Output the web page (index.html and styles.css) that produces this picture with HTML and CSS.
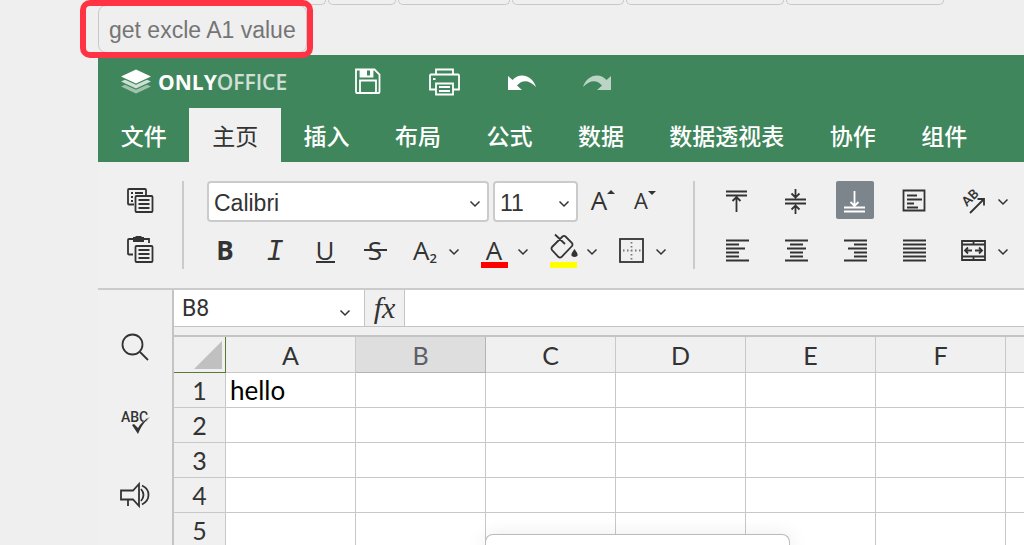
FILE: index.html
```html
<!DOCTYPE html>
<html lang="zh-CN">
<head>
    <meta charset="UTF-8">
    <meta name="viewport" content="width=device-width, initial-scale=1.0">
    <title>ONLYOFFICE</title>
    <link rel="stylesheet" href="styles.css">
</head>
<body>
    <svg class="defs" aria-hidden="true">
        <symbol id="chevron" viewBox="0 0 12 8"><path d="M1.5 1.5L6 6l4.500-4.500"/></symbol>
    </svg>

    <div class="host-buttons">
        <button class="host-button w-first"></button>
        <button class="host-button w-small"></button>
        <button class="host-button w-mid"></button>
        <button class="host-button w-mid"></button>
        <button class="host-button w-large"></button>
        <button class="host-button w-large"></button>
    </div>
    <div class="host-action">
        <button class="value-button">get excle A1 value</button>
        <div class="highlight"></div>
    </div>

    <div class="editor">
        <header class="header">
            <div class="title-bar">
                <svg class="logo-mark" viewBox="0 0 32 26">
                    <path d="M1 17.500l4-1.800 11 5 11-5 4 1.800-15 7z" fill="#fff" opacity=".5"/>
                    <path d="M1 12.500l4-1.800 11 5 11-5 4 1.800-15 7z" fill="#fff" opacity=".75"/>
                    <path d="M16 .5l15 7-15 7-15-7z" fill="#fff"/>
                </svg>
                <div class="logo-text"><b>ONLY</b><span>OFFICE</span></div>
                <div class="quick">
                    <button class="quick-button" aria-label="保存">
                        <svg viewBox="0 0 32 32"><path d="M4 3.500h18.500l5 5V26q0 1-1 1H5q-1 0-1-1z"/><path d="M8.500 4v6.500h12V4M8 26.500v-12h16v12"/><path d="M9 4h6v6H9zM18 4h2v6h-2z" fill="#fff" stroke="none"/></svg>
                    </button>
                    <button class="quick-button" aria-label="打印">
                        <svg viewBox="0 0 32 32"><path d="M8 8.500v-5h17v5M7.500 23.500H2v-14q0-1 1-1h27q1 0 1 1v14h-5.500M8 17.500h17v11H8zM11 21h11M11 25h11"/><path d="M5 12h2.500v2H5z" fill="#fff" stroke="none"/></svg>
                    </button>
                    <button class="quick-button" aria-label="撤销">
                        <svg viewBox="0 0 32 32"><path class="solid" d="M4 10v14h14l-5-4.500c5-6 12-6 19 1.500C28 9 16 6 8.500 14z"/></svg>
                    </button>
                    <button class="quick-button dim" aria-label="重做">
                        <svg viewBox="0 0 32 32"><path class="solid" d="M31 10v14H17l5-4.500c-5-6-12-6-19 1.500C7 9 19 6 26.500 14z"/></svg>
                    </button>
                </div>
            </div>
            <nav class="tabs">
                <button class="tab">文件</button>
                <button class="tab active">主页</button>
                <button class="tab">插入</button>
                <button class="tab">布局</button>
                <button class="tab">公式</button>
                <button class="tab">数据</button>
                <button class="tab">数据透视表</button>
                <button class="tab">协作</button>
                <button class="tab">组件</button>
            </nav>
        </header>

        <div class="toolbar">
            <div class="group clipboard">
                <div class="tool-row">
                    <button class="tool" aria-label="复制">
                        <svg viewBox="0 0 30 30"><path d="M9 19.500H4q-1 0-1-1V5q0-1 1-1h16q1 0 1 1v5"/><path d="M6 8h2M10 8h8M6 12h2M6 16h2"/><rect x="10.500" y="11" width="17" height="16" rx="1"/><path d="M13.500 15h11M13.500 19h11M13.500 23h11"/></svg>
                    </button>
                </div>
                <div class="tool-row">
                    <button class="tool" aria-label="粘贴">
                        <svg viewBox="0 0 30 30"><path d="M8 19.500H4q-1 0-1-1V5q0-1 1-1h20v4"/><path d="M8 2h2l1-1h5l1 1h2v5H8z" fill="#333" stroke="none"/><rect x="10.500" y="11" width="17" height="16" rx="1"/><path d="M13.500 15h11M13.500 19h11M13.500 23h11"/></svg>
                    </button>
                </div>
            </div>
            <div class="group font">
                <div class="tool-row combos">
                    <label class="combo font-name">
                        <select aria-label="字体"><option>Calibri</option></select>
                        <svg class="chevron"><use href="#chevron"/></svg>
                    </label>
                    <label class="combo font-size">
                        <select aria-label="字号"><option>11</option></select>
                        <svg class="chevron"><use href="#chevron"/></svg>
                    </label>
                    <button class="tool resize grow">A<svg class="mark" viewBox="0 0 8 5"><path d="M0 5l4-4 4 4z"/></svg></button>
                    <button class="tool resize shrink">A<svg class="mark" viewBox="0 0 8 5"><path d="M0 0l4 4 4-4z"/></svg></button>
                </div>
                <div class="tool-row">
                    <button class="tool letter bold">B</button>
                    <button class="tool letter italic">I</button>
                    <button class="tool letter underline">U</button>
                    <button class="tool letter strike">S</button>
                    <button class="tool letter split"><span class="face">A<small>2</small></span><svg class="chevron"><use href="#chevron"/></svg></button>
                    <button class="tool letter split"><span class="face color">A</span><svg class="chevron"><use href="#chevron"/></svg></button>
                    <button class="tool split" aria-label="填充颜色"><span class="face fill">
                        <svg viewBox="0 0 30 30"><path d="M4 15L14.500 4.500q1.500-1.200 3 0l6.500 6.500q1 1.500 0 3L13.500 25q-1.500 1.200-3 0l-6.500-7q-1-1.500 0-3zM7 2.500l10 9.500"/><path d="M26.500 18.500c-3 4-3 5.500 0 5.500s3-1.500 0-5.500z" fill="#333"/></svg>
                    </span><svg class="chevron"><use href="#chevron"/></svg></button>
                    <button class="tool split" aria-label="边框"><span class="face">
                        <svg viewBox="0 0 30 30"><rect x="3" y="4" width="23" height="23"/><path d="M6 15.500h18M14.500 7v18" stroke="#777" stroke-dasharray="1.500 2.500"/></svg>
                    </span><svg class="chevron"><use href="#chevron"/></svg></button>
                </div>
            </div>
            <div class="group align">
                <div class="tool-row">
                    <button class="tool" aria-label="顶端对齐"><svg viewBox="0 0 30 30"><path d="M4 6.500h21M4 10.500h21M14.500 27V12M10.500 16l4-4 4 4"/></svg></button>
                    <button class="tool" aria-label="垂直居中"><svg viewBox="0 0 30 30"><path d="M4 14.500h21M4 18.500h21M14.500 4v8M10.500 8.500l4 4 4-4M14.500 29v-8M10.500 24.500l4-4 4 4"/></svg></button>
                    <button class="tool pressed" aria-label="底端对齐"><svg viewBox="0 0 30 30"><path d="M4 22.500h21M4 26.500h21M14.500 6v15M10.500 17l4 4 4-4"/></svg></button>
                    <button class="tool" aria-label="自动换行"><svg viewBox="0 0 30 30"><path d="M4.500 5.500h21v20h-21zM8 10.500h10M8 14.500h15M8 18.500h7M8 22.500h11"/></svg></button>
                    <button class="tool split" aria-label="方向"><span class="face"><svg viewBox="0 0 30 30"><text transform="translate(9 22) rotate(-45)">AB</text><path d="M12 28l14-14M19.500 14H26v6.500"/></svg></span><svg class="chevron"><use href="#chevron"/></svg></button>
                </div>
                <div class="tool-row">
                    <button class="tool" aria-label="左对齐"><svg viewBox="0 0 30 30"><path d="M4 5.500h23M4 9.500h13M4 13.500h19M4 17.500h13M4 21.500h13M4 25.500h23"/></svg></button>
                    <button class="tool" aria-label="居中"><svg viewBox="0 0 30 30"><path d="M4 5.500h23M9 9.500h13M6 13.500h19M9 17.500h13M9 21.500h13M4 25.500h23"/></svg></button>
                    <button class="tool" aria-label="右对齐"><svg viewBox="0 0 30 30"><path d="M4 5.500h23M14 9.500h13M8 13.500h19M14 17.500h13M14 21.500h13M4 25.500h23"/></svg></button>
                    <button class="tool" aria-label="两端对齐"><svg viewBox="0 0 30 30"><path d="M4 5.500h23M4 9.500h23M4 13.500h23M4 17.500h23M4 21.500h23M4 25.500h23"/></svg></button>
                    <button class="tool split" aria-label="合并"><span class="face"><svg viewBox="0 0 30 30"><path d="M4 6h23v19H4zM4 9.500h23M4 21.500h23M15.500 6v3M15.500 22v3M7 15.500h7M17 15.500h7M10 12.500l-3 3 3 3M21 12.500l3 3-3 3"/></svg></span><svg class="chevron"><use href="#chevron"/></svg></button>
                </div>
            </div>
        </div>

        <div class="workspace">
            <aside class="side">
                <button class="side-button" aria-label="查找"><svg viewBox="0 0 30 30"><circle cx="12.500" cy="12.500" r="10"/><path d="M20 20l8 8"/></svg></button>
                <button class="side-button" aria-label="拼写检查"><svg viewBox="0 0 30 30"><text x="1" y="16">ABC</text><path class="tick" d="M12 19l2-1 4 4C20 18 24 14 30 11c-6 5-9 10-12 17z"/></svg></button>
                <button class="side-button" aria-label="反馈"><svg viewBox="0 0 30 30"><path d="M1 10.500h12l6-6.500v22l-6-6.500H1zM8 20v6M21 9q5 6 0 12M22 5.500q7 3.500 6.500 9.500 0 6-6.500 9.500"/></svg></button>
            </aside>
            <main class="sheet">
                <div class="formula-bar">
                    <div class="name-box">
                        <input class="name-input" aria-label="名称" value="B8">
                        <button class="name-list" aria-label="名称列表"><svg class="chevron"><use href="#chevron"/></svg></button>
                    </div>
                    <button class="fx">fx</button>
                    <input class="formula" aria-label="公式栏">
                </div>
                <table class="grid">
                    <thead>
                        <tr><th class="corner"><svg viewBox="0 0 28 28"><path d="M28 0v28H0z"/></svg></th><th>A</th><th class="selected">B</th><th>C</th><th>D</th><th>E</th><th>F</th><th class="rest"></th></tr>
                    </thead>
                    <tbody>
                        <tr><th>1</th><td>hello</td><td></td><td></td><td></td><td></td><td></td><td></td></tr>
                        <tr><th>2</th><td></td><td></td><td></td><td></td><td></td><td></td><td></td></tr>
                        <tr><th>3</th><td></td><td></td><td></td><td></td><td></td><td></td><td></td></tr>
                        <tr><th>4</th><td></td><td></td><td></td><td></td><td></td><td></td><td></td></tr>
                        <tr><th>5</th><td></td><td></td><td></td><td></td><td></td><td></td><td></td></tr>
                    </tbody>
                </table>
            </main>
        </div>
    </div>
    <div class="popup"></div>
</body>
</html>
```
FILE: styles.css
```css
* {
    box-sizing: border-box;
}
body {
    margin: 0;
    height: 100vh;
    overflow: hidden;
    position: relative;
    background-color: #efefef;
    font-family: "Liberation Sans", "Noto Sans CJK SC", sans-serif;
    color: #333;
}
button, input, select {
    font-family: inherit;
    color: inherit;
    background: none;
    border: 0;
    padding: 0;
    margin: 0;
    outline: none;
}
svg {
    display: block;
    fill: none;
    stroke: #333;
    stroke-width: 2;
}
.defs {
    position: absolute;
    width: 0;
    height: 0;
}
.chevron {
    width: 12px;
    height: 8px;
    stroke-width: 1.5;
}

/* buttons of the page around the editor */
.host-buttons {
    display: flex;
    gap: 2px;
    padding-left: 98px;
}
.host-button {
    height: 5px;
    border: 1px solid #c8c8c8;
    border-top: 0;
    border-radius: 0 0 8px 8px;
}
.w-first { width: 228px; }
.w-small { width: 68px; }
.w-mid { width: 112px; }
.w-large { width: 158px; }
.host-action {
    position: relative;
    height: 50px;
    padding-left: 98px;
}
.value-button {
    height: 48px;
    padding: 2px 10px 0;
    border: 1px solid #c8c8c8;
    border-radius: 8px;
    font-size: 23px;
    color: #757575;
}
.highlight {
    position: absolute;
    left: 80px;
    top: -5px;
    width: 233px;
    height: 58px;
    border: 6px solid #ff3344;
    border-radius: 10px;
}

.editor {
    margin-left: 98px;
    background-color: #f0f0f0;
}
.header {
    background-color: #40865c;
    color: #fff;
}
.title-bar {
    display: flex;
    align-items: center;
    height: 53px;
    padding-left: 22px;
}
.title-bar svg {
    stroke: none;
}
.logo-mark {
    width: 32px;
    height: 26px;
    margin-right: 6px;
}
.logo-text {
    font-family: "Open Sans", sans-serif;
    font-size: 21px;
    width: 132px;
}
.logo-text span {
    font-weight: 600;
    opacity: 0.75;
}
.quick {
    display: flex;
    gap: 44px;
    margin-left: 62px;
}
.title-bar .quick-button svg {
    width: 32px;
    height: 32px;
    stroke: #fff;
    stroke-width: 1.8;
}
.quick-button .solid {
    fill: #fff;
    stroke: none;
}
.dim {
    opacity: 0.65;
}
.tabs {
    display: flex;
    max-width: 892px;
    height: 54px;
}
.tab {
    flex: 1 0 auto;
    padding: 0 22px;
    font-family: "Noto Sans CJK SC", sans-serif;
    font-size: 23px;
    font-weight: 500;
}
.tab.active {
    background-color: #f0f0f0;
    color: #333;
    font-weight: 400;
}

.toolbar {
    display: flex;
    height: 128px;
    padding: 19px 0;
    border-bottom: 2px solid #cbcbcb;
    overflow: hidden;
}
.group {
    display: flex;
    flex-direction: column;
    justify-content: space-between;
    flex-shrink: 0;
    height: 88px;
}
.group + .group {
    border-left: 2px solid #cbcbcb;
}
.clipboard {
    padding: 0 23px;
}
.font {
    padding-left: 16px;
    padding-right: 17px;
}
.align {
    padding-left: 23px;
}
.align .tool-row {
    gap: 21px;
}
.tool-row {
    display: flex;
    height: 38px;
}
.combos {
    height: 41px;
    gap: 4px;
    padding-left: 7px;
}
.combo {
    display: grid;
    align-items: center;
    height: 41px;
    border: 2px solid #cbcbcb;
    border-radius: 4px;
    background-color: #fff;
}
.combo select, .combo .chevron {
    grid-area: 1 / 1;
}
.combo select {
    appearance: none;
    width: 100%;
    height: 37px;
    padding: 2px 0 0 5px;
    font-size: 23px;
}
.combo .chevron {
    justify-self: end;
    margin-right: 6px;
    margin-top: 5px;
    pointer-events: none;
}
.font-name { width: 282px; }
.font-size { width: 85px; }
.tool {
    display: flex;
    align-items: center;
    justify-content: center;
    flex-shrink: 0;
    width: 38px;
    height: 38px;
    border-radius: 2px;
}
.tool svg:not(.chevron):not(.mark) {
    width: 30px;
    height: 30px;
    stroke-width: 1.8;
}
.tool text {
    font: 700 13px Lato, sans-serif;
    fill: #333;
    stroke: none;
}
.tool.pressed {
    background-color: #7d858c;
}
.pressed svg {
    stroke: #fff;
}
.resize {
    font-family: "Open Sans", sans-serif;
    font-size: 26px;
    line-height: 38px;
}
.grow {
    margin-left: 2px;
}
.shrink {
    font-size: 22px;
}
.mark {
    width: 8px;
    height: 5px;
    align-self: flex-start;
    margin-top: 8px;
    fill: #333;
    stroke: none;
}
.shrink .mark {
    margin-top: 10px;
}
.font .tool-row:not(.combos) .tool {
    width: 50px;
}
.letter {
    font-family: "Open Sans", sans-serif;
    font-size: 26px;
    line-height: 36px;
}
.bold {
    font-weight: 700;
}
.italic {
    padding-top: 5px;
    font-family: "Liberation Mono", monospace;
    font-style: italic;
    font-size: 29px;
}
.underline {
    background: linear-gradient(#333, #333) center 30px / 19px 2px no-repeat;
}
.strike {
    background: linear-gradient(#333, #333) center / 23px 2px no-repeat;
}
.font .tool-row .tool.split {
    width: 69px;
}
.split {
    justify-content: flex-start;
}
.split .chevron {
    margin-top: 4px;
    flex-shrink: 0;
}
.face {
    display: flex;
    justify-content: center;
    width: 50px;
    flex-shrink: 0;
}
.align .split {
    width: 74px;
}
.align .face {
    width: 38px;
    margin-right: 5px;
}
.font .split .chevron {
    margin-left: -2px;
}
.face small {
    align-self: flex-end;
    font-size: 13px;
    font-weight: 600;
    line-height: 20px;
}
.color {
    background: linear-gradient(#f00, #f00) center bottom / 27px 6px no-repeat;
}
.fill {
    height: 36px;
    background: linear-gradient(#ff0, #ff0) center bottom / 27px 6px no-repeat;
}

.workspace {
    display: flex;
}
.side {
    display: flex;
    flex-direction: column;
    width: 76px;
    padding-top: 20px;
    border-right: 2px solid #c4c4c4;
}
.side-button {
    display: flex;
    align-items: center;
    justify-content: center;
    height: 74px;
}
.side-button svg {
    width: 30px;
    height: 30px;
    stroke-width: 1.8;
}
.side-button text {
    font: 500 14px Roboto, sans-serif;
    fill: #333;
    stroke: none;
}
.side-button .tick {
    fill: #333;
    stroke: #f0f0f0;
    stroke-width: 1;
    paint-order: stroke;
}
.sheet {
    flex: 1;
    min-width: 0;
}
.formula-bar {
    display: flex;
    height: 37px;
    border-bottom: 1px solid #c4c4c4;
    background-color: #fff;
}
.name-box {
    display: flex;
    width: 190px;
}
.name-input {
    flex: 1;
    min-width: 0;
    padding: 1px 0 0 8px;
    font-family: Roboto, sans-serif;
    font-size: 23px;
}
.name-list {
    width: 37px;
    padding: 9px 12px 0;
}
.fx {
    width: 41px;
    border: 1px solid #c4c4c4;
    border-width: 0 1px;
    background-color: #f0f0f0;
    font-family: "Liberation Serif", serif;
    font-style: italic;
    font-size: 30px;
    line-height: 32px;
}
.formula {
    flex: 1;
    min-width: 0;
    padding: 0 8px;
    font-size: 23px;
}

.grid {
    width: 100%;
    margin-top: 8px;
    table-layout: fixed;
    border-collapse: separate;
    border-spacing: 0;
    border-top: 2px solid #c4c4c4;
    background-color: #fff;
    font-family: Lato, sans-serif;
    font-size: 26px;
}
.grid th, .grid td {
    height: 35px;
    padding: 0;
    border-right: 1px solid #c8c8c8;
    border-bottom: 1px solid #c8c8c8;
    line-height: 34px;
}
.grid th {
    width: 130px;
    background-color: #f0f0f0;
    font-size: 25px;
    font-weight: 400;
}
.grid thead th {
    height: 36px;
}
.grid td {
    padding-left: 4px;
    color: #000;
}
.grid tr > :last-child {
    border-right: 0;
}
.grid .selected {
    background-color: #dedede;
    border-color: #b4b4b4;
    color: #5c6066;
}
.grid .corner {
    width: 52px;
    border-color: #5a7a32;
}
.grid .rest {
    width: auto;
}
.corner svg {
    width: 28px;
    height: 28px;
    margin: 0 3px 0 auto;
    fill: #c0c0c0;
    stroke: none;
}

.popup {
    position: absolute;
    left: 485px;
    bottom: 0;
    width: 305px;
    height: 11px;
    border: 1px solid #bbb;
    border-bottom: 0;
    border-radius: 8px 8px 0 0;
    background-color: #fff;
    box-shadow: 0 4px 20px rgba(0, 0, 0, 0.15);
}
```
